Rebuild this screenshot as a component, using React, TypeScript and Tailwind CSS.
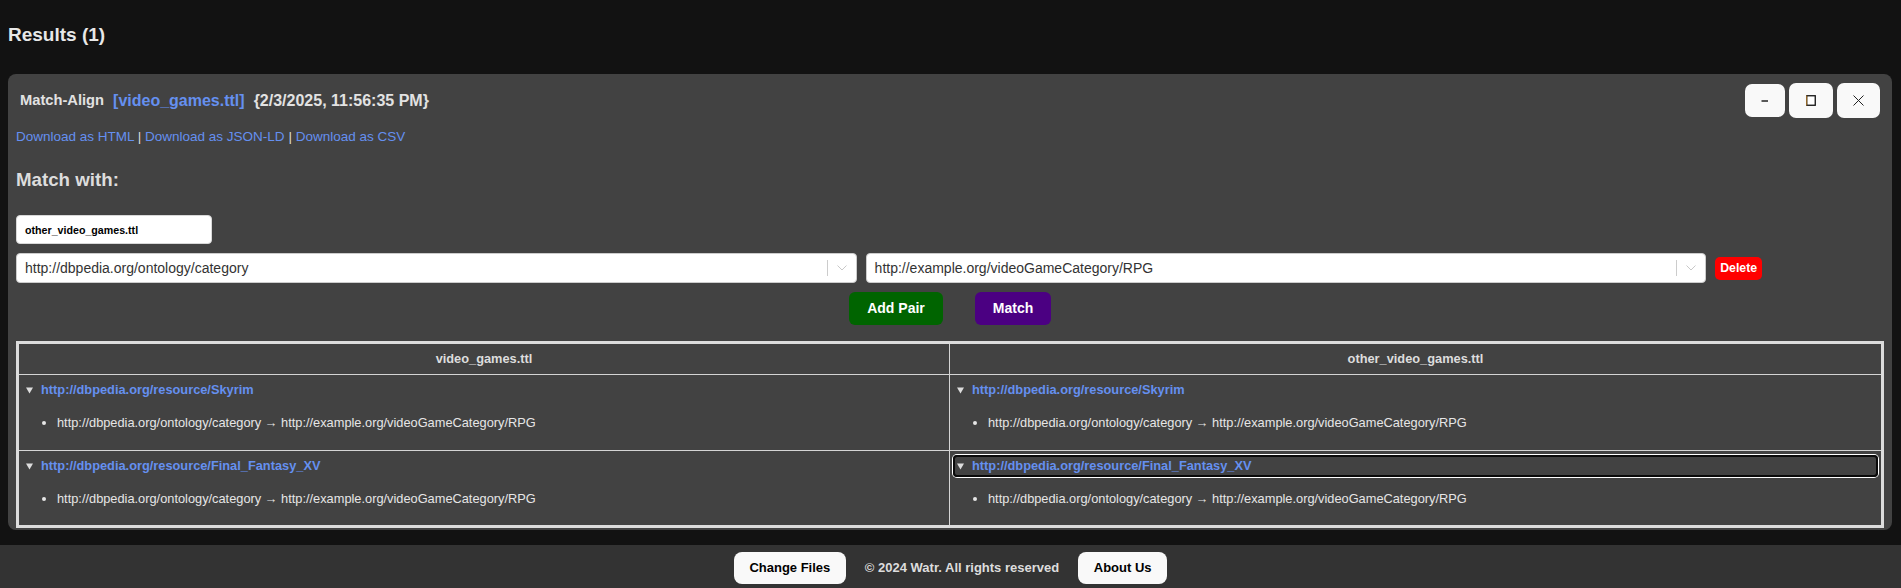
import React from "react";

function Chevron() {
  return (
    <svg width="10" height="6" viewBox="0 0 10 6" className="block">
      <polyline points="0.5,0.5 5,5 9.5,0.5" fill="none" stroke="#c8c8c8" strokeWidth="1" />
    </svg>
  );
}

function SelectBox({ value, width }: { value: string; width: string }) {
  return (
    <div className={`${width} h-[30px] flex items-center bg-white border border-[#cccccc] rounded-[4px]`}>
      <div className="flex-1 pl-[8px] text-[14px] text-[#333333] truncate">{value}</div>
      <div className="w-px h-[16px] bg-[#cccccc]" />
      <div className="w-[28px] flex items-center justify-center">
        <Chevron />
      </div>
    </div>
  );
}

function Triangle() {
  return (
    <svg width="7" height="7" viewBox="0 0 7 7" className="block shrink-0">
      <polygon points="0,0.5 7,0.5 3.5,6.5" fill="#dddddd" />
    </svg>
  );
}

function Cell({ href, focused, border }: { href: string; focused?: boolean; border?: boolean }) {
  return (
    <div className={`px-[3px] pt-[4px] ${border ? "border-r border-[#d4d4d4]" : ""}`}>
      <div
        className={`h-[22px] flex items-center pl-[2px] rounded-[4px] border-2 ${
          focused ? "border-[#0a0a0a] shadow-[0_0_0_1px_#ffffff]" : "border-transparent"
        }`}
      >
        <Triangle />
        <span className="ml-[8px] text-[12.8px] font-bold text-[#6590f0] leading-[16px]">{href}</span>
      </div>
      <ul className="list-disc pl-[35px] mt-[14px] text-[12.8px] leading-[16px] text-[#e6e6e6]">
        <li>http://dbpedia.org/ontology/category → http://example.org/videoGameCategory/RPG</li>
      </ul>
    </div>
  );
}

export default function App() {
  return (
    <div className="min-h-screen bg-[#121212] font-['Liberation_Sans',Arial,sans-serif] flex flex-col">
      <div className="h-[74px] px-[8px] pt-[24px]">
        <h2 className="text-[19px] leading-[22px] font-bold text-[#e8e8e8]">Results (1)</h2>
      </div>

      <div className="ml-[8px] mr-[9px] rounded-[8px] bg-[#424242] pt-[9px] px-[8px] pb-[2px]">
        <div className="h-[35px] flex items-center justify-between px-[4px]">
          <div className="flex items-center">
            <span className="text-[14.7px] font-bold text-[#e2e2e2]">Match-Align</span>
            <span className="ml-[9px] text-[16px] font-bold text-[#6590f0]">[video_games.ttl]</span>
            <span className="ml-[9px] text-[16px] font-bold text-[#e2e2e2]">{"{2/3/2025, 11:56:35 PM}"}</span>
          </div>
          <div className="flex items-center gap-[4px]">
            <button className="w-[40px] h-[33px] rounded-[7px] bg-[#f9f9f9] flex items-center justify-center">
              <svg width="8" height="2" viewBox="0 0 8 2" className="block">
                <line x1="0.5" y1="1" x2="7" y2="1" stroke="#000" strokeWidth="1.3" />
              </svg>
            </button>
            <button className="w-[44px] h-[35px] rounded-[7px] bg-[#f9f9f9] flex items-center justify-center">
              <svg width="10" height="11" viewBox="0 0 10 11" className="block">
                <rect x="0.75" y="0.75" width="8.5" height="9.5" fill="#ffffff" stroke="#111" strokeWidth="1.3" />
                <line x1="0.7" y1="0.5" x2="0.7" y2="10.5" stroke="#d08a2a" strokeWidth="0.8" />
              </svg>
            </button>
            <button className="w-[43px] h-[35px] rounded-[7px] bg-[#f9f9f9] flex items-center justify-center">
              <svg width="11" height="11" viewBox="0 0 11 11" className="block">
                <line x1="0.5" y1="0.5" x2="10.5" y2="10.5" stroke="#222" strokeWidth="1" />
                <line x1="10.5" y1="0.5" x2="0.5" y2="10.5" stroke="#222" strokeWidth="1" />
              </svg>
            </button>
          </div>
        </div>

        <div className="mt-[11px] text-[13.5px] leading-[15px] text-[#dddddd]">
          <a className="text-[#6590f0]">Download as HTML</a> | <a className="text-[#6590f0]">Download as JSON-LD</a> |{" "}
          <a className="text-[#6590f0]">Download as CSV</a>
        </div>

        <h3 className="mt-[25px] text-[18.72px] leading-[21px] font-bold text-[#dddddd]">Match with:</h3>

        <div className="mt-[25px] w-[196px] h-[29px] bg-white border border-[#d8d8d8] rounded-[4px] flex items-center pl-[8px] text-[10.67px] font-bold text-black">
          other_video_games.ttl
        </div>

        <div className="mt-[9px] flex items-center">
          <SelectBox value="http://dbpedia.org/ontology/category" width="w-[45%]" />
          <div className="w-[9px]" />
          <SelectBox value="http://example.org/videoGameCategory/RPG" width="w-[45%]" />
          <button className="ml-[9px] w-[47px] h-[23px] rounded-[5px] bg-[#ff0000] text-white text-[12.3px] font-bold flex items-center justify-center">
            Delete
          </button>
        </div>

        <div className="mt-[9px] flex justify-center gap-[32px]">
          <button className="w-[94px] h-[33px] rounded-[6px] bg-[#006400] text-white text-[14px] font-bold">Add Pair</button>
          <button className="w-[76px] h-[33px] rounded-[6px] bg-[#4b0082] text-white text-[14px] font-bold">Match</button>
        </div>

        <div className="mt-[16px] border-[3px] border-[#dcdcdc]">
          <div className="grid grid-cols-2 h-[31px] border-b border-[#d4d4d4]">
            <div className="flex items-center justify-center border-r border-[#d4d4d4] text-[12.8px] font-bold text-[#dddddd]">
              video_games.ttl
            </div>
            <div className="flex items-center justify-center text-[12.8px] font-bold text-[#dddddd]">
              other_video_games.ttl
            </div>
          </div>
          <div className="grid grid-cols-2 h-[76px] border-b border-[#d4d4d4]">
            <Cell href="http://dbpedia.org/resource/Skyrim" border />
            <Cell href="http://dbpedia.org/resource/Skyrim" />
          </div>
          <div className="grid grid-cols-2 h-[74px]">
            <Cell href="http://dbpedia.org/resource/Final_Fantasy_XV" border />
            <Cell href="http://dbpedia.org/resource/Final_Fantasy_XV" focused />
          </div>
        </div>
      </div>

      <div className="mt-[15px] h-[43px] bg-[#333333] flex justify-center items-start pt-[7px]">
        <button className="w-[112px] h-[32px] rounded-[8px] bg-[#f9f9f9] text-black text-[13px] font-bold">Change Files</button>
        <div className="mx-[19px] h-[32px] flex items-center text-[13px] font-bold text-[#dddddd]">
          © 2024 Watr. All rights reserved
        </div>
        <button className="w-[89px] h-[32px] rounded-[8px] bg-[#f9f9f9] text-black text-[13px] font-bold">About Us</button>
      </div>
    </div>
  );
}
